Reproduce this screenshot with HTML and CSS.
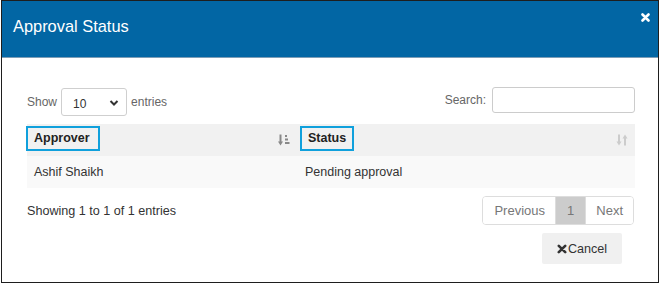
FILE: index.html
```html
<!DOCTYPE html>
<html>
<head>
<meta charset="utf-8">
<link rel="stylesheet" href="styles.css">
</head>
<body>
<div class="modal">
  <div class="modal-header">
    <h4 class="modal-title">Approval Status</h4>
    <button class="close" aria-label="Close">
      <svg width="9" height="9" viewBox="0 0 9 9"><path d="M1.5 1.5 L7.5 7.5 M7.5 1.5 L1.5 7.5" stroke="#fff" stroke-width="2.6" stroke-linecap="round"/></svg>
    </button>
  </div>
  <div class="modal-body">
    <div class="toolbar">
      <div class="length">
        <span class="lbl">Show</span>
        <div class="select">
          <span>10</span>
          <svg width="10" height="8" viewBox="0 0 10 8"><path d="M1.5 2 L5 5.5 L8.5 2" fill="none" stroke="#333" stroke-width="2"/></svg>
        </div>
        <span class="lbl">entries</span>
      </div>
      <div class="search">
        <span class="lbl">Search:</span>
        <div class="input"></div>
      </div>
    </div>
    <div class="table">
      <div class="thead">
        <div class="th col1">
          <span class="hl">Approver</span>
          <svg class="sort sorted" width="12" height="12" viewBox="0 0 12 12">
            <path d="M2.5 0.5 V9" stroke="#888" stroke-width="2"/>
            <path d="M0 7.5 L2.5 11.5 L5 7.5 Z" fill="#888"/>
            <rect x="7" y="1" width="2" height="2" fill="#888"/>
            <rect x="7" y="4.5" width="3" height="2" fill="#888"/>
            <rect x="7" y="8" width="4.5" height="2" fill="#888"/>
          </svg>
        </div>
        <div class="th col2">
          <span class="hl">Status</span>
          <svg class="sort" width="12" height="12" viewBox="0 0 12 12">
            <path d="M3 0.5 V8.5" stroke="#ccc" stroke-width="2"/>
            <path d="M0.5 7.5 L3 11.5 L5.5 7.5 Z" fill="#ccc"/>
            <path d="M9 3.5 V11.5" stroke="#ccc" stroke-width="2"/>
            <path d="M6.5 4.5 L9 0.5 L11.5 4.5 Z" fill="#ccc"/>
          </svg>
        </div>
      </div>
      <div class="tr">
        <div class="td col1">Ashif Shaikh</div>
        <div class="td col2">Pending approval</div>
      </div>
    </div>
    <div class="info-row">
      <div class="info">Showing 1 to 1 of 1 entries</div>
      <div class="pagination">
        <span class="page">Previous</span>
        <span class="page active">1</span>
        <span class="page">Next</span>
      </div>
    </div>
    <div class="footer">
      <button class="btn-cancel"><svg width="10" height="10" viewBox="0 0 10 10"><path d="M1.8 1.8 L8.2 8.2 M8.2 1.8 L1.8 8.2" stroke="#333" stroke-width="2.6" stroke-linecap="round"/></svg>Cancel</button>
    </div>
  </div>
</div>
</body>
</html>
```
FILE: styles.css
```css
* { box-sizing: border-box; }
html, body { margin: 0; padding: 0; background: #fff; }
body { font-family: "Liberation Sans", Arial, sans-serif; color: #333; }

.modal {
  width: 658px;
  height: 283px;
  margin-left: 1px;
  border: 1px solid #1e1e1e;
  background: #fff;
  display: flex;
  flex-direction: column;
}

.modal-header {
  height: 57px;
  background: #0266a4;
  border-bottom: 1px solid #7d9db6;
  display: flex;
  justify-content: space-between;
  align-items: flex-start;
  padding: 0 7px 0 11px;
}
.modal-title {
  margin: 15px 0 0;
  font-size: 16.4px;
  font-weight: normal;
  line-height: 20px;
  color: #fff;
}
.close {
  margin-top: 12px;
  padding: 0;
  border: 0;
  background: none;
  width: 10px;
  height: 10px;
  display: flex;
}

.modal-body {
  padding: 0 22px 0 25px;
  flex: 1;
}

.toolbar {
  display: flex;
  justify-content: space-between;
  align-items: flex-start;
  padding-top: 29px;
}
.lbl { font-size: 12px; color: #666; }
.length { display: flex; align-items: center; gap: 4px; margin-top: 1px; }
.select {
  width: 66px;
  height: 28px;
  border: 1px solid #cfcfcf;
  border-radius: 3px;
  display: flex;
  align-items: center;
  justify-content: space-between;
  padding: 3px 7px 0 11px;
  font-size: 12px;
  color: #333;
}
.select svg { margin-top: -2px; }
.search { display: flex; align-items: center; gap: 6px; }
.input {
  width: 143px;
  height: 26px;
  border: 1px solid #ccc;
  border-radius: 3px;
  margin-right: 1px;
}

.table { margin-top: 8px; width: 608px; }
.thead { display: flex; height: 32px; background: #f1f1f1; }
.tr { display: flex; height: 32px; background: #f9f9f9; align-items: center; }
.col1 { width: 270px; }
.col2 { flex: 1; }
.th {
  display: flex;
  justify-content: space-between;
  align-items: flex-start;
  padding-top: 2px;
}
.th.col1 { margin-left: -1px; padding-right: 6px; }
.th.col2 { padding-left: 4px; padding-right: 7px; }
.hl {
  border: 2px solid #10a0dc;
  height: 25px;
  padding: 3px 8px 0 6px;
  font-size: 12.5px;
  font-weight: bold;
  color: #222;
}
.th.col2 .hl { padding: 3px 6px 0 6px; }
.sort { margin-top: 8px; }
.td { font-size: 12.5px; color: #333; }
.td.col1 { padding-left: 7px; }
.td.col2 { padding-left: 8px; }

.info-row {
  display: flex;
  justify-content: space-between;
  align-items: center;
  margin-top: 8px;
  width: 608px;
}
.info { font-size: 12.6px; color: #333; }
.pagination {
  display: flex;
  border: 1px solid #ddd;
  border-radius: 4px;
  overflow: hidden;
  margin-right: 1px;
}
.page {
  padding: 5px 11px;
  font-size: 13px;
  line-height: 17px;
  color: #777;
  background: #fff;
}
.page:first-child { padding: 5px 10px 5px 11px; }
.page.active { background: #cccccc; padding: 5px 11px; }
.page + .page { border-left: 1px solid #ddd; }
.page:last-child { padding: 5px 10px; }

.footer {
  display: flex;
  justify-content: flex-end;
  margin-top: 8px;
  padding-right: 13px;
  width: 608px;
}
.btn-cancel {
  width: 80px;
  height: 31px;
  border: 0;
  background: #f0f0f0;
  border-radius: 2px;
  font-family: "Liberation Sans", Arial, sans-serif;
  font-size: 12.6px;
  color: #333;
  display: flex;
  align-items: center;
  justify-content: center;
  gap: 1px;
  padding: 0;
}
```
